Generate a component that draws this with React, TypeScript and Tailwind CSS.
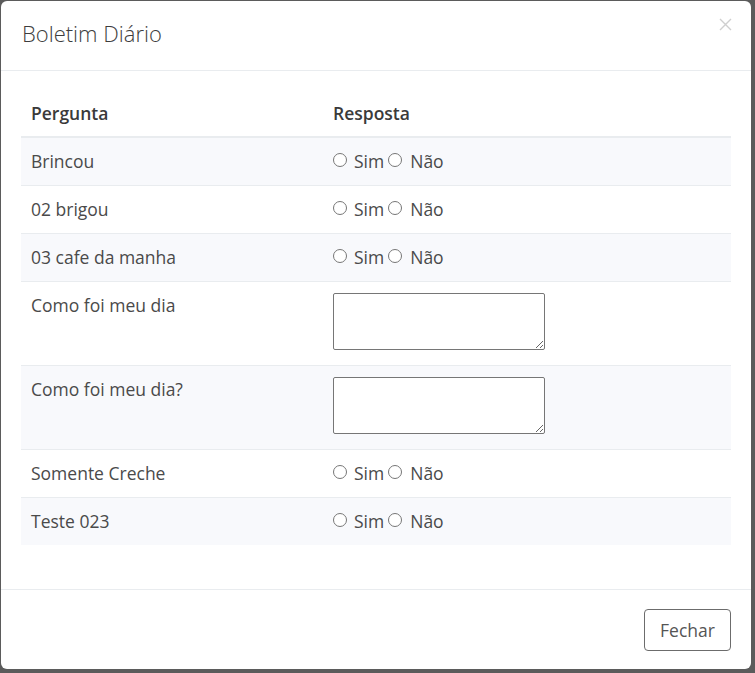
import { useState } from 'react';

type Pergunta = { id: number; texto: string; tipo: 'simnao' | 'texto' };

const PERGUNTAS: Pergunta[] = [
  { id: 1, texto: 'Brincou', tipo: 'simnao' },
  { id: 2, texto: '02 brigou', tipo: 'simnao' },
  { id: 3, texto: '03 cafe da manha', tipo: 'simnao' },
  { id: 4, texto: 'Como foi meu dia', tipo: 'texto' },
  { id: 5, texto: 'Como foi meu dia?', tipo: 'texto' },
  { id: 6, texto: 'Somente Creche', tipo: 'simnao' },
  { id: 7, texto: 'Teste 023', tipo: 'simnao' },
];

export default function App() {
  const [respostas, setRespostas] = useState<Record<number, string>>({});

  return (
    <div
      className="h-[673px] w-full overflow-hidden bg-[#5b5b5b] pl-[1px] pt-[1px]"
      style={{ fontFamily: '"Open Sans", "Noto Sans", sans-serif' }}
    >
      <div className="w-[750px] rounded-[6px] bg-white">
        {/* Header */}
        <div className="flex items-center justify-between border-b border-[#e9ecef] pl-[21px] pr-[15px] pt-[16px] pb-[20px]">
          <h5 className="text-[22px] font-light leading-[33px] text-[#3d3d3d]">Boletim Diário</h5>
          <button className="-mt-[18px] p-1" aria-label="Fechar">
            <svg width="13" height="13" viewBox="0 0 13 13">
              <path d="M1 1 L12 12 M12 1 L1 12" stroke="#cfcfcf" strokeWidth="1.4" />
            </svg>
          </button>
        </div>

        {/* Body */}
        <div className="px-5 pt-[17px] pb-[44px]">
          <table className="w-full border-collapse text-[17.5px] leading-6 text-[#4a4a4a]">
            <thead>
              <tr className="border-b-2 border-[#e9ecef]">
                <th className="w-[302px] pl-[10px] pt-[13px] pb-[11px] text-left font-semibold text-[#3a3a3a]">Pergunta</th>
                <th className="pl-[10px] pt-[13px] pb-[11px] text-left font-semibold text-[#3a3a3a]">Resposta</th>
              </tr>
            </thead>
            <tbody>
              {PERGUNTAS.map((p, i) => (
                <tr key={p.id} className={`border-t border-[#e9ecef] ${i % 2 === 0 ? 'bg-[#f8f9fc]' : 'bg-white'}`}>
                  <td className={`pl-[10px] pt-[11px] align-top ${p.tipo === 'texto' ? 'pb-[15px]' : 'pb-[12px]'}`}>{p.texto}</td>
                  <td className={`pl-[10px] pt-[11px] align-top ${p.tipo === 'texto' ? 'pb-[15px]' : 'pb-[12px]'}`}>
                    {p.tipo === 'simnao' ? (
                      <span className="whitespace-nowrap">
                        <input
                          type="radio"
                          name={`p${p.id}`}
                          className="mr-[7px] h-[14px] w-[14px] align-[1px]"
                          checked={respostas[p.id] === 'sim'}
                          onChange={() => setRespostas({ ...respostas, [p.id]: 'sim' })}
                        />
                        <span className="mr-[4px]">Sim</span>
                        <input
                          type="radio"
                          name={`p${p.id}`}
                          className="mr-[8px] h-[14px] w-[14px] align-[1px]"
                          checked={respostas[p.id] === 'nao'}
                          onChange={() => setRespostas({ ...respostas, [p.id]: 'nao' })}
                        />
                        <span>Não</span>
                      </span>
                    ) : (
                      <textarea className="block h-[57px] w-[212px] rounded-[2px] border border-[#767676] bg-white" />
                    )}
                  </td>
                </tr>
              ))}
            </tbody>
          </table>
        </div>

        {/* Footer */}
        <div className="flex justify-end border-t border-[#e9ecef] px-5 pt-[19px] pb-[18px]">
          <button className="h-[42px] w-[87px] rounded-[4px] border border-[#6c6c6c] text-[17.5px] leading-6 text-[#555555]">
            Fechar
          </button>
        </div>
      </div>
    </div>
  );
}
